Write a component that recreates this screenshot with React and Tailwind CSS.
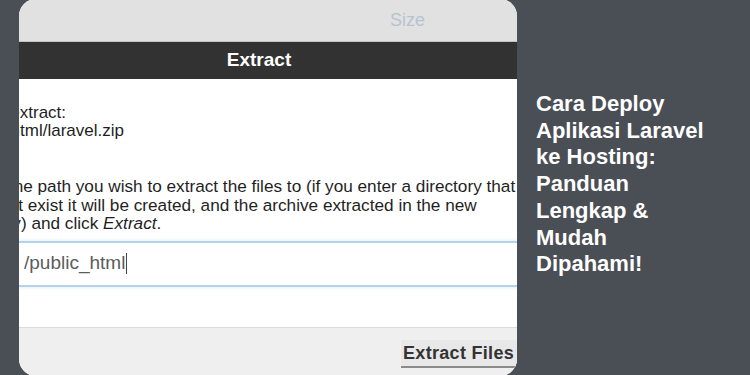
import React from "react";

const sans = { fontFamily: '"Liberation Sans", Arial, sans-serif' };

function ExtractDialog() {
  return (
    <div className="ml-[19px] -mt-px w-[498px] h-[377px] shrink-0 rounded-[17px] overflow-hidden bg-white flex flex-col" style={sans}>
      {/* file table header behind the dialog */}
      <div className="h-[43px] shrink-0 bg-[#e1e1e1] border-b border-[#c4c4c4] flex items-center">
        <span className="ml-[371px] mt-[1px] text-[18px] text-[#b7c3cf]">Size</span>
      </div>
      <div className="h-[37px] shrink-0 bg-[#323232] flex items-center justify-center pr-[18px]">
        <span className="text-[19px] font-bold text-white">Extract</span>
      </div>

      <div className="flex-1 flex flex-col overflow-hidden">
        <div className="pt-[25px] text-[17px] leading-[18px] text-[#1f1f1f] whitespace-nowrap">
          <div className="-ml-[89px]">Archive to extract:</div>
          <div className="-ml-[67px]">/public_html/laravel.zip</div>
        </div>
        <div className="mt-[37px] text-[17.2px] leading-[18.5px] text-[#1f1f1f] whitespace-nowrap">
          <div className="-ml-[56px]">Enter the path you wish to extract the files to (if you enter a directory that</div>
          <div className="-ml-[62px]">does not exist it will be created, and the archive extracted in the new</div>
          <div className="-ml-[64px]">directory) and click <em>Extract</em>.</div>
        </div>
        <div className="mt-[8px] h-[46px] border-y-2 border-[#b5d2e8] shadow-[0_0_4px_#d6e8f5] flex items-center pl-[5px]">
          <span className="text-[19px] text-[#5c5c5c]">/public_html</span>
          <span className="w-px h-[21px] bg-[#444] ml-px" />
        </div>
        <div className="flex-1" />
        <div className="h-[49px] shrink-0 bg-[#efefef] border-t border-[#dcdcdc] flex items-start justify-end pt-[12px]">
          <button className="h-[28px] pl-[2px] pr-[3px] border-b-2 border-[#8a8a8a] bg-[#e8e8e8] text-[18px] font-bold text-[#333] leading-none tracking-[0.3px]">
            Extract Files
          </button>
        </div>
      </div>
    </div>
  );
}

export default function App() {
  return (
    <div className="w-[750px] h-[375px] bg-[#4a4e55] flex overflow-hidden">
      <ExtractDialog />
      <div className="flex-1 flex items-center pl-[19px] pb-[6px]">
        <h1 className="w-[180px] text-[22px] leading-[26.7px] font-bold text-white" style={sans}>
          Cara Deploy Aplikasi Laravel ke Hosting: Panduan Lengkap &amp; Mudah Dipahami!
        </h1>
      </div>
    </div>
  );
}
